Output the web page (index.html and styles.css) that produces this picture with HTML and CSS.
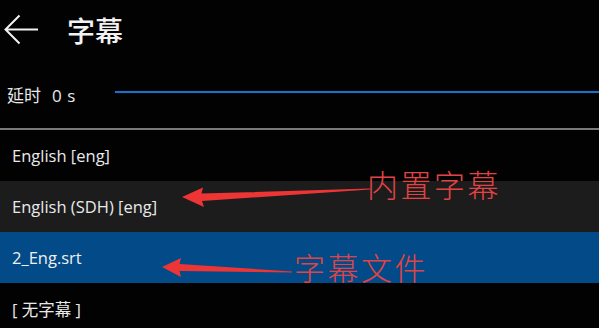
FILE: index.html
```html
<!DOCTYPE html>
<html lang="zh">
<head>
<meta charset="utf-8">
<title>字幕</title>
<link rel="stylesheet" href="styles.css">
</head>
<body>
<div class="screen">
  <header class="header">
    <svg class="back" width="36" height="32" viewBox="0 0 36 32">
      <path d="M1 15.5 H34 M15.5 1.5 L1.5 15.5 L15.5 29.5" fill="none" stroke="#f2f2f2" stroke-width="2"/>
    </svg>
    <h1 class="title">字幕</h1>
  </header>
  <div class="delay">
    <span class="delay-label">延时<span class="delay-value">0 s</span></span>
    <div class="delay-bar"></div>
  </div>
  <div class="divider"></div>
  <ul class="list">
    <li class="item">English [eng]</li>
    <li class="item hover">English (SDH) [eng]</li>
    <li class="item selected">2_Eng.srt</li>
    <li class="item">[ 无字幕 ]</li>
  </ul>

  <svg class="arrows" width="599" height="328" viewBox="0 0 599 328">
    <path d="M182 197 L203 187.5 L201.5 193.5 L370 188.5 L370 189.5 L202 201 L204 207 Z" fill="#ee3535"/>
    <path d="M162 267 L181 258 L179.5 264 L292 271.5 L292 272.5 L179.5 271 L181 277 Z" fill="#ee3535"/>
  </svg>
  <span class="note note-1">内置字幕</span>
  <span class="note note-2">字幕文件</span>
</div>
</body>
</html>
```

FILE: styles.css
```css
html, body {
  margin: 0;
  padding: 0;
  background: #000;
}
.screen {
  position: relative;
  width: 599px;
  height: 328px;
  overflow: hidden;
  background: #020203;
  color: #ececec;
  font-family: "Open Sans", "Noto Sans CJK SC", sans-serif;
}
.header {
  height: 60px;
  display: flex;
  align-items: center;
  padding-left: 4px;
}
.back {
  display: block;
  margin-top: -1px;
}
.title {
  margin: 0 0 0 27px;
  font-family: "Noto Sans CJK SC", sans-serif;
  font-size: 28px;
  font-weight: 500;
  color: #f2f2f2;
  line-height: 1;
}
.delay {
  height: 68px;
  display: flex;
  align-items: center;
  padding-left: 7px;
}
.delay-label {
  font-family: "Noto Sans CJK SC", sans-serif;
  font-size: 17px;
  width: 108px;
  color: #e8e8e8;
}
.delay-value {
  font-family: "Open Sans", sans-serif;
  margin-left: 11px;
  word-spacing: 1px;
}
.delay-bar {
  flex: 1;
  height: 2px;
  margin-top: -5px;
  background: #1f6fc6;
  box-shadow: 0 0 1px #1a4f8a;
}
.divider {
  height: 2px;
  background: #7a7a7a;
}
.list {
  list-style: none;
  margin: 0;
  padding: 0;
}
.item {
  height: 51px;
  display: flex;
  align-items: center;
  padding-left: 12px;
  font-size: 16.5px;
  color: #e9e9e9;
}
.item.hover {
  background: #1c1c1c;
}
.item.selected {
  background: #024a88;
  color: #f0f0f0;
}
.arrows {
  position: absolute;
  left: 0;
  top: 0;
}
.note {
  position: absolute;
  font-family: "Noto Sans CJK SC", sans-serif;
  font-weight: 300;
  font-size: 31px;
  line-height: 1;
  color: #e04444;
  letter-spacing: 2.5px;
}
.note-1 {
  left: 367px;
  top: 168px;
}
.note-2 {
  left: 294px;
  top: 251px;
}
```
